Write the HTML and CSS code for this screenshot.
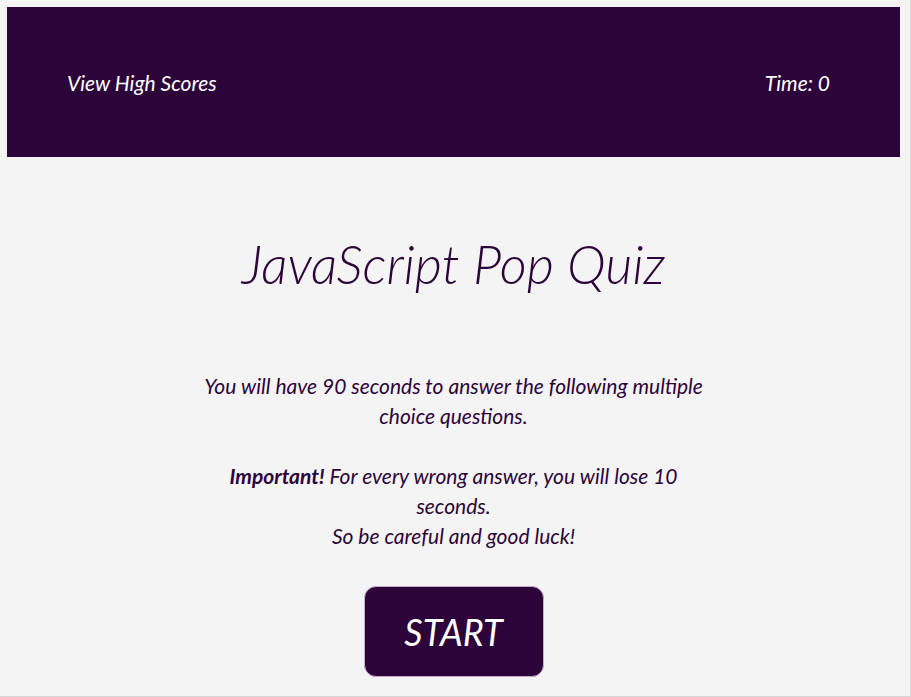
FILE: index.html
```html
<!DOCTYPE html>
<html lang="en">
<head>
<meta charset="utf-8">
<title>JavaScript Pop Quiz</title>
<link rel="stylesheet" href="styles.css">
</head>
<body>
<div class="page">
  <header class="topbar">
    <a class="topbar-link" href="#">View High Scores</a>
    <span class="timer">Time: 0</span>
  </header>
  <main class="intro">
    <h1 class="title">JavaScript Pop Quiz</h1>
    <p class="lead">You will have 90 seconds to answer the following multiple choice questions.</p>
    <p class="lead lead-last"><strong>Important!</strong> For every wrong answer, you will lose 10 seconds.<br>So be careful and good luck!</p>
    <button class="start-btn" type="button">START</button>
  </main>
</div>
</body>
</html>
```
FILE: styles.css
```css
html, body {
  margin: 0;
  padding: 0;
  background: #f4f4f4;
}
.page {
  box-sizing: border-box;
  height: 697px;
  padding: 7px 10px 0 7px;
  border-right: 1px solid #d6d6d6;
  border-bottom: 1px solid #d6d6d6;
  overflow: hidden;
  font-family: Lato, "Open Sans", sans-serif;
  font-style: italic;
  color: #2d0439;
}
.topbar {
  height: 150px;
  background: #2d0439;
  display: flex;
  align-items: center;
  justify-content: space-between;
  padding: 0 70px 0 60px;
}
.topbar-link, .timer {
  color: #ffffff;
  font-size: 21px;
  text-decoration: none;
}
.intro {
  display: flex;
  flex-direction: column;
  align-items: center;
  text-align: center;
}
.title {
  font-size: 52.5px;
  font-weight: 300;
  margin: 75px 0 76px;
}
.lead {
  font-size: 21px;
  line-height: 30px;
  width: 512px;
  margin: 0 0 30px;
}
.lead-last {
  margin-bottom: 35px;
}
.lead strong {
  font-weight: 700;
}
.start-btn {
  font-family: inherit;
  font-style: italic;
  font-size: 36px;
  color: #ffffff;
  background: #2d0439;
  border: 1px solid #c9a9cf;
  border-radius: 12px;
  width: 180px;
  height: 91px;
  cursor: pointer;
}
```
